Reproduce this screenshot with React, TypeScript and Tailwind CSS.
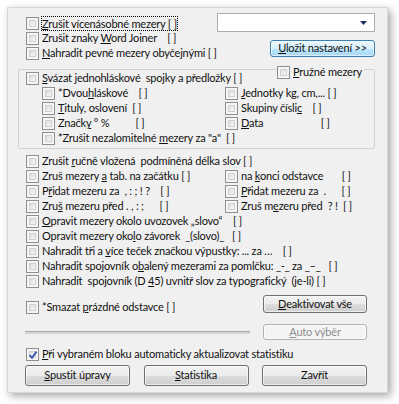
import React from "react";

// "&" marks the access key letter (underlined)
function Label({ text, dim }: { text: string; dim?: boolean }) {
  const i = text.indexOf("&");
  if (i < 0) return <span className={dim ? "text-[#8d8d8d]" : ""}>{text}</span>;
  return (
    <span className={dim ? "text-[#8d8d8d]" : ""}>
      {text.slice(0, i)}
      <u className="underline-offset-[1px]">{text.charAt(i + 1)}</u>
      {text.slice(i + 2)}
    </span>
  );
}

function Box({ checked }: { checked?: boolean }) {
  return (
    <span className="relative w-[13px] h-[13px] shrink-0 border border-[#8e8f8f] bg-[#f6f6f6] p-[2px] flex">
      <span className="block w-full h-full border border-[#cdd0d4] bg-[linear-gradient(135deg,#dcdee1,#f7f7f7)]" />
      {checked && (
        <svg className="absolute left-[1px] top-[1px]" width="10" height="10" viewBox="0 0 10 10">
          <path d="M1.5 5.2 L4 7.8 L8.6 1.6" fill="none" stroke="#3b56a6" strokeWidth="1.8" />
        </svg>
      )}
    </span>
  );
}

function Check({ text, checked, focus }: { text: string; checked?: boolean; focus?: boolean }) {
  return (
    <div className="h-[15px] flex items-center gap-[3px] whitespace-pre">
      <Box checked={checked} />
      <span className={focus ? "outline outline-1 outline-dotted outline-black leading-[13px]" : ""}>
        <Label text={text} />
      </span>
    </div>
  );
}

function Button({ text, kind, className }: { text: string; kind?: "focus" | "off"; className: string }) {
  const look =
    kind === "focus"
      ? "border-[#3c7fb1] bg-[linear-gradient(#eaf6fd_0%,#d9f0fc_50%,#bee6fd_50%,#a7d9f5_100%)]"
      : kind === "off"
      ? "border-[#adb2b5] bg-[#f4f4f4]"
      : "border-[#707070] bg-[linear-gradient(#f2f2f2_0%,#ebebeb_50%,#dddddd_50%,#cfcfcf_100%)]";
  return (
    <div className={`${className} ${look} border rounded-[3px] flex items-center justify-center whitespace-pre shadow-[inset_0_0_0_1px_rgba(255,255,255,0.6)]`}>
      <Label text={text} dim={kind === "off"} />
    </div>
  );
}

export default function App() {
  return (
    <div className="w-[399px] h-[404px] bg-white pt-[7px] pl-[7px] font-['Lato'] text-[11px] tracking-[-0.2px] text-[#111]">
      <div className="w-[381px] h-[386px] bg-[#f0f0f0] border border-[#d8d8d8] shadow-[3px_3px_8px_rgba(0,0,0,0.35)] pl-[10px] pr-[12px] pt-[5px]">
        {/* top */}
        <div className="flex justify-between h-[44px]">
          <div className="pl-[8px] pt-[3px]">
            <Check text="&Zrušit vícenásobné mezery [ ]" focus />
            <Check text="Zrušit znaky &Word Joiner    [ ]" />
            <Check text="&Nahradit pevné mezery obyčejnými [ ]" />
          </div>
          <div className="w-[160px] flex flex-col items-end">
            <div className="w-full h-[19px] bg-white border border-[#abadb3] flex items-center justify-end pr-[7px]">
              <svg width="7" height="4" viewBox="0 0 7 4">
                <path d="M0 0 H7 L3.5 4 Z" fill="#1c3160" />
              </svg>
            </div>
            <Button text="&Uložit nastavení >>" kind="focus" className="mt-[8px] w-[105px] h-[17px]" />
          </div>
        </div>

        {/* group */}
        <div className="relative mt-[12px] h-[80px] border border-[#cfd2d6] rounded-[2px] pt-[1px]">
          <div className="absolute top-[-5px] left-[258px] bg-[#f0f0f0] pr-[2px]">
            <Check text="&Pružné mezery" />
          </div>
          <div className="pl-[7px]">
            <Check text="&Svázat jednohláskové  spojky a předložky [ ]" />
          </div>
          <div className="pl-[23px] grid grid-cols-[183px_1fr]">
            <Check text="*Dvou&hláskové    [ ]" />
            <Check text="&Jednotky kg, cm,... [ ]" />
            <Check text="&Tituly, oslovení  [ ]" />
            <Check text="Skupiny čísli&c    [ ]" />
            <Check text="Značk&y ° %          [ ]" />
            <Check text="&Data                      [ ]" />
            <Check text={'*Zrušit nezalomitelné &mezery za "a"  [ ]'} />
          </div>
        </div>

        {/* lower checkboxes */}
        <div className="mt-[5px] pl-[8px] grid grid-cols-[199px_1fr]">
          <div className="col-span-2">
            <Check text="Zrušit &ručně vložená  podmíněná délka slov [ ]" />
          </div>
          <Check text="Zruš mezery &a tab. na začátku [ ]" />
          <Check text="na &konci odstavce       [ ]" />
          <Check text="P&řidat mezeru za  , : ; ! ?    [ ]" />
          <Check text="&Přidat mezeru za  .      [ ]" />
          <Check text="Zru&š mezeru před . , : ;      [ ]" />
          <Check text="Zruš m&ezeru před  ? !  [ ]" />
          <div className="col-span-2">
            <Check text="&Opravit mezery okolo uvozovek „slovo“    [ ]" />
            <Check text="Opravit mezery oko&lo závorek  _(slovo)_   [ ]" />
            <Check text="Nahradit tři a &více teček značkou výpustky: ... za …    [ ]" />
            <Check text="Nahradit spojovník o&balený mezerami za pomlčku: _-_ za _–_   [ ]" />
            <Check text="Nahradit  spojovník (D &45) uvnitř slov za typografický  (je-li) [ ]" />
          </div>
        </div>

        {/* smazat + deaktivovat */}
        <div className="mt-[6px] flex items-start justify-between">
          <div className="pl-[8px] mt-[5px]">
            <Check text="*Smazat &prázdné odstavce [ ]" />
          </div>
          <Button text="&Deaktivovat vše" className="w-[104px] h-[18px] mr-[8px]" />
        </div>

        {/* bar + auto */}
        <div className="mt-[9px] flex items-center justify-between">
          <div className="ml-[7px] w-[225px] h-[3px] border-t border-[#a9a9a9] bg-[#d4d4d4]" />
          <Button text="&Auto výběr" kind="off" className="w-[104px] h-[16px] mr-[8px]" />
        </div>

        <div className="mt-[7px] pl-[8px]">
          <Check text="&Při vybraném bloku automaticky aktualizovat statistiku" checked />
        </div>

        <div className="mt-[3px] ml-[7px] mr-[8px] flex justify-between">
          <Button text="&Spustit úpravy" className="w-[105px] h-[21px]" />
          <Button text="&Statistika" className="w-[105px] h-[21px]" />
          <Button text="Zavřít" className="w-[105px] h-[21px]" />
        </div>
      </div>
    </div>
  );
}
